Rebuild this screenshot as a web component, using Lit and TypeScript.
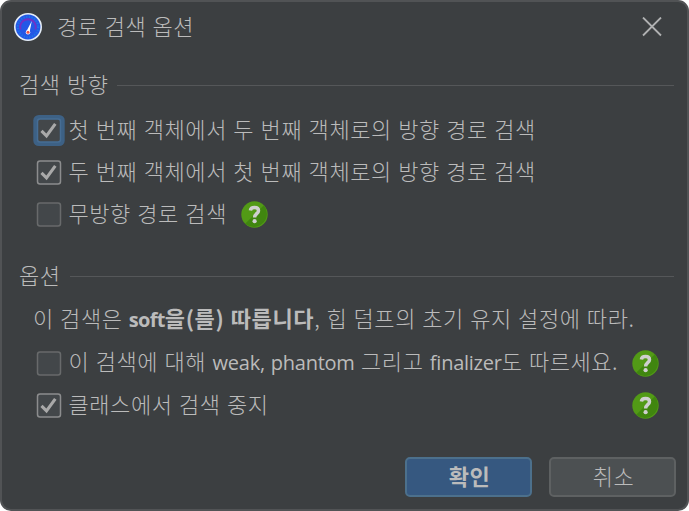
import { html, css, svg, LitElement } from 'lit';
import { customElement, property } from 'lit/decorators.js';

@customElement('check-box')
export class CheckBoxElement extends LitElement {
  static styles = css`
    :host {
      display: flex;
      flex: none;
    }

    svg {
      display: block;
      overflow: visible;
    }
  `;

  @property({ type: Boolean })
  checked = false;

  @property({ type: Boolean })
  focused = false;

  render() {
    const stroke = this.focused ? '#466d94' : this.checked ? '#8c8d8e' : '#686a6b';
    return html`
      <svg width="25" height="25" viewBox="0 0 25 25">
        ${this.focused
          ? svg`<rect x="-2.7" y="-3" width="31.4" height="31" rx="5.5" fill="#3d6185" />`
          : ''}
        <rect x="1.5" y="1" width="23" height="23" rx="2.5" fill="#43474a" stroke=${stroke} stroke-width="1.5" />
        ${this.checked
          ? svg`<path d="M5.5 12.8 L10.5 17.8 L19.3 5.9" fill="none" stroke="#a9a9a9" stroke-width="3.1" />`
          : ''}
      </svg>
    `;
  }
}

@customElement('help-icon')
export class HelpIconElement extends LitElement {
  static styles = css`
    :host {
      display: flex;
      flex: none;
    }

    svg {
      display: block;
    }
  `;

  render() {
    return html`
      <svg width="27" height="27" viewBox="0 0 27 27">
        <circle cx="13.5" cy="13.5" r="13.2" fill="#529a16" />
        <path d="M22.8 4.2 A13.2 13.2 0 0 1 4.2 22.8 Z" fill="#40860f" />
        <path
          d="M9.4 9.4 C9.7 7.2 11.3 6.5 13.5 6.5 C16 6.5 17.5 7.6 17.5 9.7 C17.5 12.7 13.6 12.6 13.6 16.5"
          fill="none"
          stroke="#cfcfcf"
          stroke-width="3.5"
        />
        <circle cx="13.6" cy="20.2" r="2.1" fill="#cfcfcf" />
      </svg>
    `;
  }
}

@customElement('app-root')
export class PathSearchDialogElement extends LitElement {
  static styles = css`
    :host {
      display: block;
      width: 689px;
      height: 511px;
      background: #fff;
      color: #bbb;
      font-family: 'Noto Sans CJK KR', sans-serif;
      font-weight: 300;
      font-size: 22px;
      line-height: 30px;
      letter-spacing: 0.56px;
      word-spacing: 1px;
      white-space: nowrap;
    }

    .dialog {
      box-sizing: border-box;
      display: flex;
      flex-direction: column;
      width: 100%;
      height: 100%;
      border: 2px solid #515355;
      border-radius: 11px;
      background: #3c3f41;
    }

    .titlebar {
      display: flex;
      align-items: center;
      height: 50px;
      padding: 0 25px 0 11px;
    }

    .title {
      flex: 1;
      margin: 0 0 4px 14px;
      word-spacing: 0.7px;
    }

    .section {
      display: flex;
      align-items: center;
      height: 30px;
      padding: 0 13px 0 17px;
    }

    .directions {
      margin-top: 16px;
    }

    .options {
      margin-top: 24px;
    }

    .rule {
      flex: 1;
      height: 1px;
      margin: 4px 0 0 9px;
      background: #555759;
    }

    .directions .rule {
      margin-left: 8px;
    }

    .rows {
      display: flex;
      flex-direction: column;
      padding: 0 28px 0 34px;
    }

    .directions + .rows {
      padding-top: 11px;
    }

    .note + .rows {
      padding-top: 7px;
    }

    .row {
      display: flex;
      align-items: center;
      height: 42px;
    }

    .label {
      margin: 0 0 4px 7.5px;
    }

    .near {
      margin-left: 14.5px;
    }

    .far {
      margin-left: auto;
    }

    .note {
      margin: 13px 0 0 31px;
      letter-spacing: 0.62px;
      word-spacing: 0.7px;
    }

    .latin {
      font-family: 'Open Sans', sans-serif;
      font-weight: 400;
      font-size: 20px;
      letter-spacing: -0.25px;
    }

    b,
    b .latin {
      font-weight: 700;
    }

    b .latin {
      letter-spacing: -0.7px;
    }

    .buttons {
      display: flex;
      justify-content: flex-end;
      gap: 17px;
      margin: auto 11px 12px 0;
    }

    .button {
      box-sizing: border-box;
      width: 127px;
      height: 40px;
      padding: 0 0 4px 2px;
      border: 2px solid #5e6162;
      border-radius: 5px;
      background: #4c5052;
      color: inherit;
      font: inherit;
      letter-spacing: inherit;
    }

    .primary {
      border-color: #4c708c;
      background: #365880;
      font-weight: 700;
    }
  `;

  render() {
    return html`
      <div class="dialog">
        <div class="titlebar">
          ${this._renderLogo()}
          <span class="title">경로 검색 옵션</span>
          <svg width="20" height="20" viewBox="0 0 20 20">
            <path d="M1 0.5 L19 18.5 M19 0.5 L1 18.5" stroke="#b0b1b2" stroke-width="1.8" />
          </svg>
        </div>
        <div class="section directions"><span>검색 방향</span><div class="rule"></div></div>
        <div class="rows">
          <div class="row">
            <check-box checked focused></check-box>
            <span class="label">첫 번째 객체에서 두 번째 객체로의 방향 경로 검색</span>
          </div>
          <div class="row">
            <check-box checked></check-box>
            <span class="label">두 번째 객체에서 첫 번째 객체로의 방향 경로 검색</span>
          </div>
          <div class="row">
            <check-box></check-box>
            <span class="label">무방향 경로 검색</span>
            <help-icon class="near"></help-icon>
          </div>
        </div>
        <div class="section options"><span>옵션</span><div class="rule"></div></div>
        <div class="note">이 검색은 <b><span class="latin">soft</span>을(를) 따릅니다</b>, 힙 덤프의 초기 유지 설정에 따라.</div>
        <div class="rows">
          <div class="row">
            <check-box></check-box>
            <span class="label">이 검색에 대해 <span class="latin">weak, phantom</span> 그리고 <span class="latin">finalizer</span>도 따르세요.</span>
            <help-icon class="far"></help-icon>
          </div>
          <div class="row">
            <check-box checked></check-box>
            <span class="label">클래스에서 검색 중지</span>
            <help-icon class="far"></help-icon>
          </div>
        </div>
        <div class="buttons">
          <button class="button primary">확인</button>
          <button class="button">취소</button>
        </div>
      </div>
    `;
  }

  private _renderLogo() {
    return html`
      <svg width="30" height="30" viewBox="0 0 30 30">
        <circle cx="15" cy="15" r="13.2" fill="#2458e6" stroke="#e4edf7" stroke-width="1.6" />
        <circle cx="15" cy="15" r="10.2" fill="none" stroke="#1c79e8" stroke-width="2" stroke-dasharray="1.2 1.5" />
        <path d="M7.6 17.5 A7.8 7.8 0 1 1 22.4 17.5" fill="none" stroke="#7132c6" stroke-width="1.8" />
        <path d="M18.8 9 L16.6 20 L13.6 19 Z" fill="#fff" />
        <circle cx="15" cy="20.3" r="2.2" fill="#fff" />
        <circle cx="15" cy="20.3" r="1.5" fill="#f0524a" />
      </svg>
    `;
  }
}

declare global {
  interface HTMLElementTagNameMap {
    'check-box': CheckBoxElement;
    'help-icon': HelpIconElement;
    'app-root': PathSearchDialogElement;
  }
}
